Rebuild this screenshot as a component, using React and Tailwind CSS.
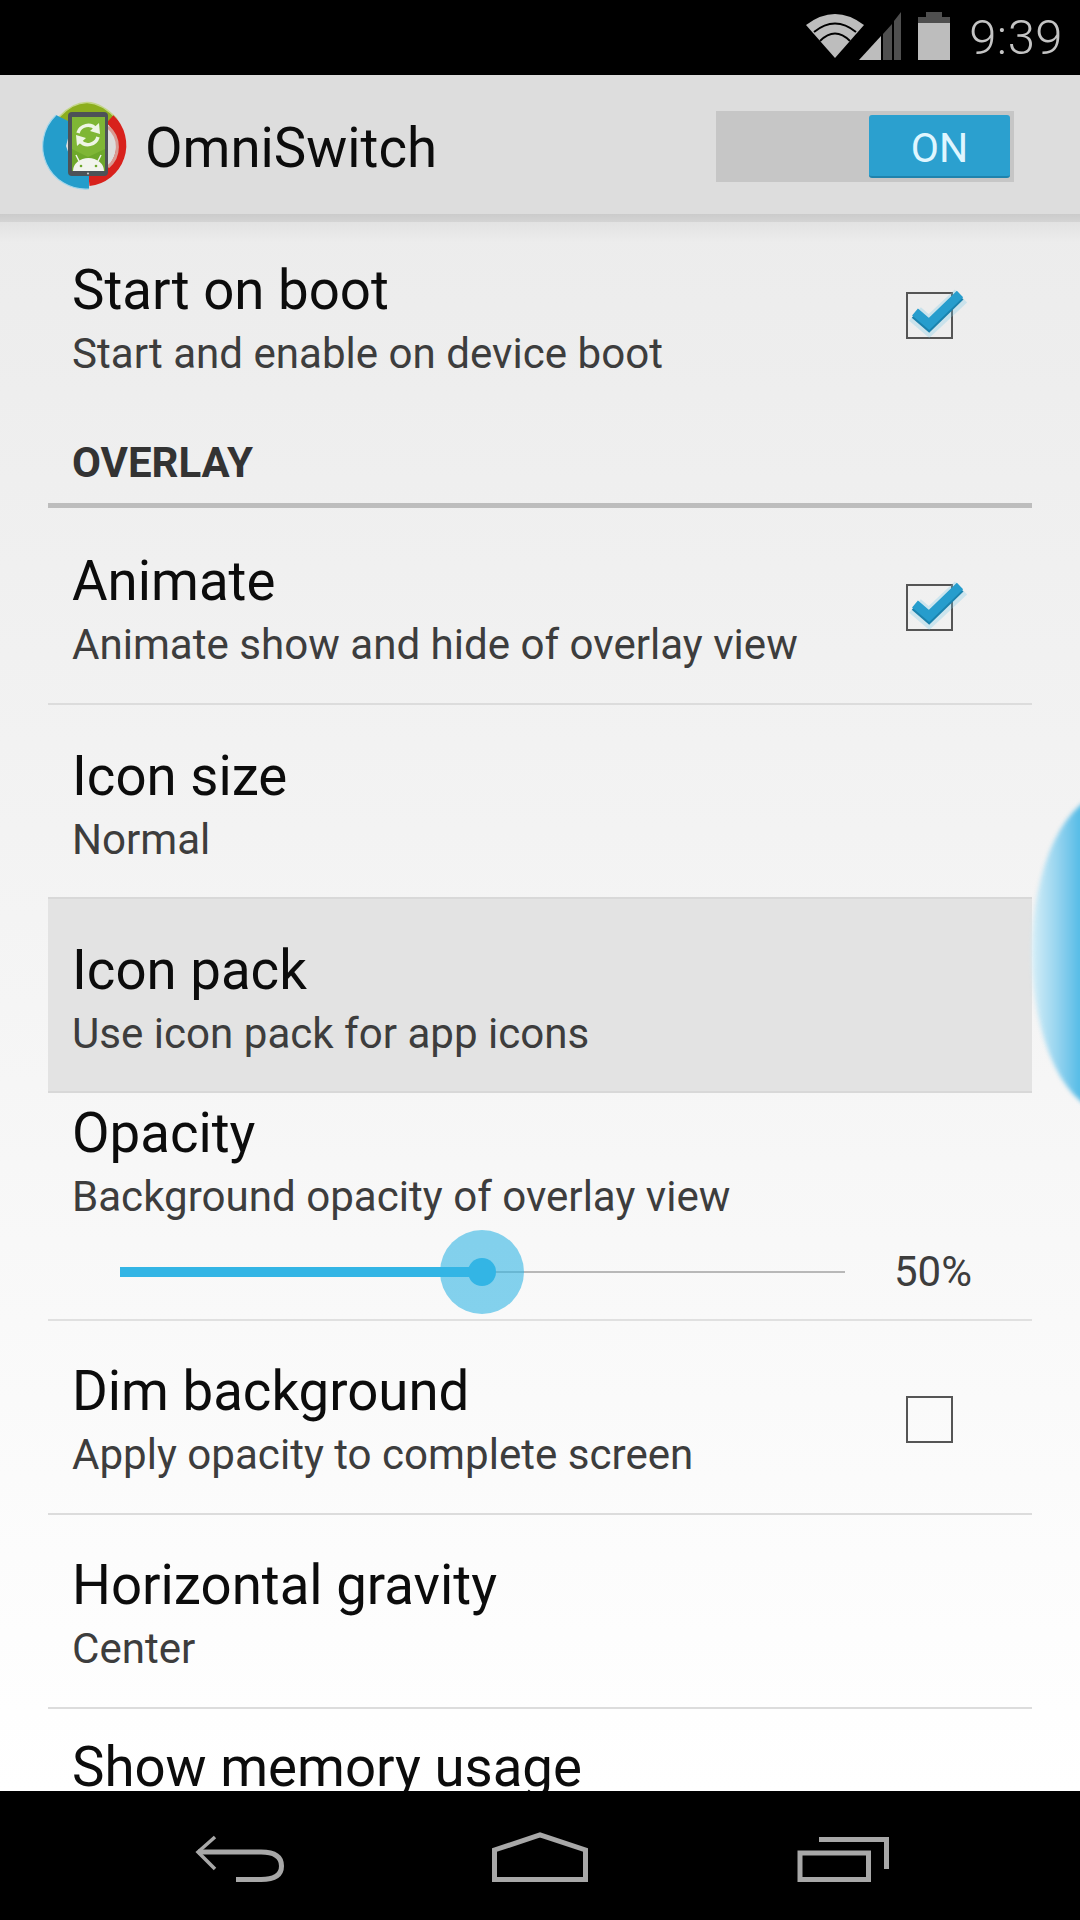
import React from "react";

const Check = ({ checked, raised }) => (
  <div className={`relative w-[47px] h-[47px] ${raised ? "mt-0" : "mt-[6px]"} border-2 border-[#555555] shrink-0`}>
    {checked && (
      <svg className="absolute left-[-4px] top-[-8px] overflow-visible" width="62" height="58" viewBox="0 0 62 58">
        <path d="M11 28 L25 40 L57 10" fill="none" stroke="#7ccbe8" strokeOpacity="0.3" strokeWidth="18" />
        <path d="M11 27 L25 39 L56 9" fill="none" stroke="#1a82ad" strokeWidth="10" transform="translate(0 1)" />
        <path d="M11 26 L25 38 L56 8" fill="none" stroke="#269dcd" strokeWidth="9" />
      </svg>
    )}
  </div>
);

const Row = ({ title, sub, check, divider = true, highlight = false, checked = false, tall = false, raised = false }) => (
  <div
    className={`flex items-center justify-between pl-[24px] pr-[79px] pb-[2px] ${tall ? "h-[197px]" : highlight ? "h-[196px] -mt-[2px]" : "h-[194px]"} ${divider ? "border-b-2 border-[#dcdcdc]" : ""} ${highlight ? "bg-[#e3e3e3] border-t-2 border-b-2 border-[#d8d8d8]" : ""}`}
  >
    <div className={`flex flex-col ${tall ? "pt-[17px]" : highlight ? "pt-[16px]" : "pt-[14px]"}`}>
      <div className="text-[54.6px] leading-[64px] text-[#0c0c0c]">{title}</div>
      <div className="text-[42.1px] leading-[64px] text-[#3d3d3d]">{sub}</div>
    </div>
    {check && <Check checked={checked} raised={raised} />}
  </div>
);

const Logo = () => (
  <svg width="90" height="92" viewBox="0 0 90 92" className="shrink-0">
    <path d="M17 16 Q45 -14 75 18 L66 24 L26 24 Z" fill="#8cae1e" />
    <path d="M17 16 Q45 -14 75 18" fill="none" stroke="#c4d68a" strokeWidth="1.5" />
    <path d="M68 18 A36 36 0 0 1 47 80" fill="none" stroke="#d8211c" strokeWidth="10" />
    <path d="M66 26 A26 26 0 0 1 66 66" fill="none" stroke="#d99a92" strokeWidth="3" />
    <path d="M14 14 A43 43 0 0 0 47 88 L47 72 L30 62 L24 45 L30 22 Z" fill="#249dcb" />
    <path d="M14 14 A43 43 0 0 0 47 88" fill="none" stroke="#a5d6ea" strokeWidth="1.2" />
    <rect x="26" y="11" width="40" height="64" rx="4" fill="#4d5257" />
    <rect x="30" y="16" width="33" height="54" fill="#6ea82b" />
    <path d="M30 16 L63 16 L63 48 L46 56 L30 48 Z" fill="#7fb635" />
    <path d="M54 28 A10.5 10.5 0 0 0 36 32" fill="none" stroke="#eef5e4" strokeWidth="3.5" />
    <path d="M38 40 A10.5 10.5 0 0 0 56 36" fill="none" stroke="#eef5e4" strokeWidth="3.5" />
    <path d="M57 22 L58 33 L48 30 Z M35 45 L34 34 L44 37 Z" fill="#eef5e4" />
    <path d="M31 70 A15.5 13 0 0 1 62 70 Z" fill="#f2f4ee" />
    <path d="M37 60 L34 54 M56 60 L59 54" stroke="#f2f4ee" strokeWidth="1.5" />
    <circle cx="39" cy="65" r="1.3" fill="#6ea82b" />
    <circle cx="54" cy="65" r="1.3" fill="#6ea82b" />
    <circle cx="46" cy="72.5" r="1.1" fill="#c8c8c8" />
  </svg>
);

export default function App() {
  return (
    <div className="relative w-[1080px] h-[1920px] overflow-hidden flex flex-col bg-black font-['Roboto',sans-serif]">
      {/* status bar */}
      <div className="h-[75px] shrink-0 flex items-start justify-end bg-black pr-[17px]">
        <svg width="96" height="50" viewBox="0 0 96 50" className="mt-[12px] mr-[16px]">
          <path d="M0 13 Q29 -9 58 13 L29 46 Z" fill="#bdbdbd" />
          <path d="M8 20 Q29 3 50 20" fill="none" stroke="#000" strokeWidth="2" />
          <path d="M14 29 Q29 14 44 29" fill="none" stroke="#000" strokeWidth="2" />
          <path d="M53 48 L75 24 L75 48 Z" fill="#bdbdbd" />
          <path d="M77 48 L77 22 L86 12 L86 48 Z M88 48 L88 9 L95 0 L95 48 Z" fill="#4f4f4f" />
        </svg>
        <svg width="32" height="48" viewBox="0 0 32 48" className="mt-[12px] mr-[19px]">
          <path d="M8 0 H24 V5 H32 V11 H0 V5 H8 Z" fill="#4f4f4f" />
          <rect x="0" y="11" width="32" height="37" fill="#bdbdbd" />
        </svg>
        <div className="text-[49px] leading-[75px] font-light text-[#c4c4c4] tracking-[0.5px]">9:39</div>
      </div>

      {/* action bar */}
      <div className="h-[139px] shrink-0 flex items-center justify-between bg-[#dddddd] pl-[42px] pr-[66px] pt-[4px]">
        <div className="flex items-center gap-[13px]">
          <Logo />
          <div className="text-[54.6px] leading-[64px] text-[#0c0c0c] mt-[2px]">OmniSwitch</div>
        </div>
        <div className="w-[298px] h-[71px] bg-[#c6c6c6] flex items-center justify-end pr-[4px]">
          <div className="w-[141px] h-[63px] pt-[6px] rounded-[3px] bg-[#2ba0cf] border-b-2 border-[#1f83ad] flex items-center justify-center text-[41px] text-[#dff6ff]">
            ON
          </div>
        </div>
      </div>

      {/* list */}
      <div className="flex-1 min-h-0 overflow-hidden bg-gradient-to-b from-[#ececec] via-[#f5f5f5] to-[#ffffff] flex flex-col">
        <div className="h-[8px] shrink-0 bg-gradient-to-b from-[#cbcbcb] to-[#d4d4d4]" />
        <div className="h-[20px] shrink-0 bg-gradient-to-b from-[#e2e2e2] to-[#ececec]" />
        <div className="px-[48px] flex flex-col">
          <div className="-mt-[23px]">
            <Row title="Start on boot" sub="Start and enable on device boot" check checked raised divider={false} />
          </div>
          <div className="h-[95px] border-b-[5px] border-[#bdbdbd] pl-[24px] flex items-start">
            <div className="text-[42px] leading-[44px] font-bold text-[#333333] mt-[28px]">OVERLAY</div>
          </div>
          <Row title="Animate" sub="Animate show and hide of overlay view" check checked tall />
          <Row title="Icon size" sub="Normal" divider={false} />
          <Row title="Icon pack" sub="Use icon pack for app icons" highlight divider={false} />
          <div className="h-[228px] border-b-2 border-[#e0e0e0] pl-[24px] flex flex-col">
            <div className="text-[54.6px] leading-[64px] text-[#0c0c0c] mt-[8px]">Opacity</div>
            <div className="text-[42.1px] leading-[64px] text-[#3d3d3d]">Background opacity of overlay view</div>
            <div className="flex items-center mt-[13px] pl-[48px]">
              <div className="relative w-[725px] h-[60px] flex items-center">
                <div className="w-[362px] h-[10px] bg-[#33b5e5]" />
                <div className="flex-1 h-[2px] bg-[#b8b8b8]" />
                <div className="absolute left-[320px] top-[-12px] w-[84px] h-[84px] rounded-full bg-[#33b5e5]/60 flex items-center justify-center">
                  <div className="w-[28px] h-[28px] rounded-full bg-[#33b5e5]" />
                </div>
              </div>
              <div className="ml-[49px] text-[42px] leading-[60px] text-[#3d3d3d]">50%</div>
            </div>
          </div>
          <Row title="Dim background" sub="Apply opacity to complete screen" check />
          <Row title="Horizontal gravity" sub="Center" />
          <div className="pl-[24px] pt-[26px] text-[54.6px] leading-[64px] text-[#0c0c0c]">Show memory usage</div>
        </div>
      </div>

      {/* nav bar */}
      <div className="h-[129px] shrink-0 bg-black flex items-start">
        <svg width="1080" height="129" viewBox="0 0 1080 129" fill="none" stroke="#a8a8a8" strokeWidth="5">
          <path d="M215 46 L198 61 L215 78" strokeWidth="3.5" />
          <path d="M198 61 H261 Q281.5 61 281.5 75 Q281.5 88.5 261 88.5 H236" />
          <path d="M494.5 88.5 V59 L540 44 L585.5 59 V88.5 Z" />
          <path d="M800 88.5 V62 H868.5 V88.5 Z" />
          <path d="M819 48.5 H886.5 V78" />
        </svg>
      </div>

      {/* edge glow */}
      <div className="absolute left-[1032px] top-[793px] w-[156px] h-[320px] rounded-[50%] bg-gradient-to-r from-[#d5eef7] via-[#58bde7] via-[30%] to-[#4db8e5] blur-[2px]" />
    </div>
  );
}
